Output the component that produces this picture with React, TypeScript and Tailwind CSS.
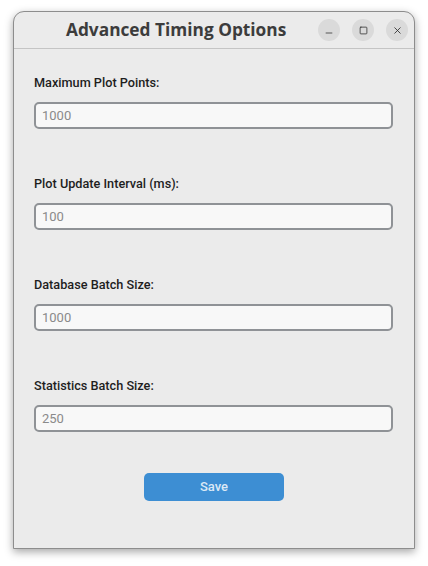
import { Minus, Square, X } from "lucide-react";

type Field = {
  label: string;
  value: string;
};

const fields: Field[] = [
  { label: "Maximum Plot Points:", value: "1000" },
  { label: "Plot Update Interval (ms):", value: "100" },
  { label: "Database Batch Size:", value: "1000" },
  { label: "Statistics Batch Size:", value: "250" },
];

function WinButton({ children }: { children: React.ReactNode }) {
  return (
    <button className="flex h-[22px] w-[22px] items-center justify-center rounded-full bg-[#dadada] text-[#2a2a2a]">
      {children}
    </button>
  );
}

function TimingField({ field }: { field: Field }) {
  return (
    <div className="flex flex-col">
      <label className="h-4 text-[12.7px] leading-4 font-medium text-[#1e1e1e]">
        {field.label}
      </label>
      <input
        placeholder={field.value}
        className="mt-[11px] h-[27px] w-full rounded-[5px] border-2 border-[#8f9296] bg-[#f8f8f8] px-[6px] text-[13px] text-[#333] outline-none placeholder:text-[#8a8a8a]"
      />
    </div>
  );
}

export default function App() {
  return (
    <div className="h-[566px] w-[428px] bg-white pt-[11px] pl-[13px] font-['Roboto',sans-serif]">
      <div className="flex h-[538px] w-[402px] flex-col overflow-hidden rounded-t-[11px] border border-[#8d8d8d] bg-[#ebebeb] shadow-[0_3px_8px_rgba(0,0,0,0.35)]">
        <div className="flex h-[37px] shrink-0 items-center border-b border-[#c4c4c4] pr-[6px]">
          <h1 className="flex-1 pl-[52px] font-['Open_Sans',sans-serif] text-[17.3px] font-bold text-[#3c3c3c]">
            Advanced Timing Options
          </h1>
          <div className="flex items-center gap-3">
            <WinButton>
              <Minus size={10} strokeWidth={1.8} className="mt-[5px]" />
            </WinButton>
            <WinButton>
              <Square size={9} strokeWidth={2} />
            </WinButton>
            <WinButton>
              <X size={11} strokeWidth={1.8} />
            </WinButton>
          </div>
        </div>
        <div className="flex flex-col gap-[47px] pr-[21px] pl-5 pt-[26px]">
          {fields.map((f) => (
            <TimingField key={f.label} field={f} />
          ))}
        </div>
        <div className="mt-[41px] flex justify-center">
          <button className="h-[28px] w-[140px] rounded-[5px] bg-[#3d8ed3] text-[13px] font-medium text-[#dbe9f6]">
            Save
          </button>
        </div>
      </div>
    </div>
  );
}
